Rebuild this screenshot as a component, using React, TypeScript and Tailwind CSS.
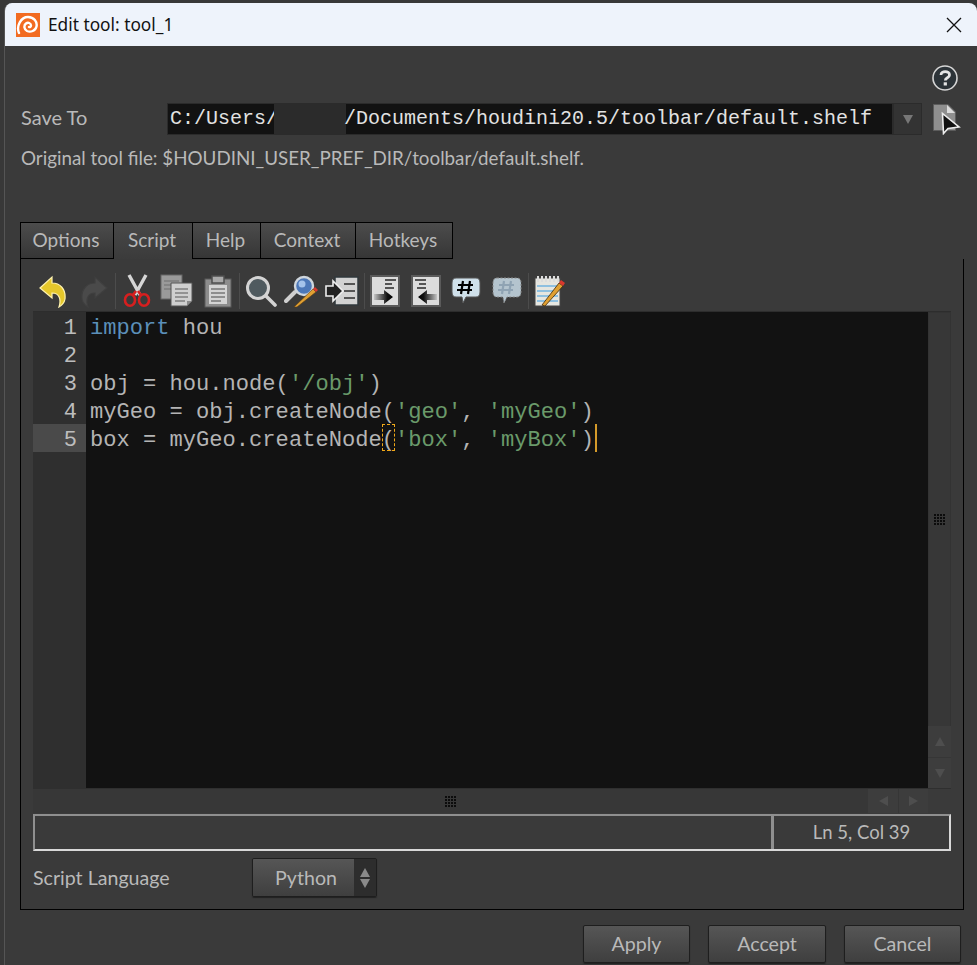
import type { ReactNode } from "react";

const SANS = "font-['Lato','Noto_Sans',sans-serif]";
const MONO = "font-['Liberation_Mono',monospace]";

function HoudiniLogo() {
  return (
    <svg width="24" height="24" viewBox="0 0 24 24" className="shrink-0">
      <rect width="24" height="24" fill="#f26b21" />
      <path
        d="M3 20 C0 13 5 4 12 4 C18 4 21.5 9 20.5 13.5 C19.5 18 14.5 19.5 11 18 C8 16.5 7.5 12.5 10 10.5 C12 9 15 10 15 12.5 C15 13.5 14 14.5 13 14"
        fill="none"
        stroke="#fff"
        strokeWidth="2.4"
        strokeLinecap="round"
      />
    </svg>
  );
}

function HelpIcon() {
  return (
    <svg width="28" height="28" viewBox="0 0 28 28">
      <circle cx="14" cy="15" r="12" fill="#222" />
      <circle cx="14" cy="14" r="12" fill="#2c3338" stroke="#d5d5d5" strokeWidth="1.6" />
      <path d="M10 11 C10 6.5 18.5 6.5 18.5 11 C18.5 14 14.3 13.6 14.3 16.6" fill="none" stroke="#e4e4e4" strokeWidth="2.8" />
      <rect x="12.7" y="18.3" width="3.2" height="3.2" fill="#e4e4e4" />
    </svg>
  );
}

function FileCursorIcon() {
  return (
    <svg width="28" height="32" viewBox="0 0 28 32">
      <path d="M0.5 1.5 H15 L22.5 9 V27.5 H0.5 Z" fill="#8f8f8f" stroke="#5c5c5c" />
      <path d="M14 2 L22 10 H14 Z" fill="#dcdcdc" />
      <path d="M9.5 10.5 L10.5 30.5 L15 25.5 L26 24 Z" fill="#111" stroke="#ededed" strokeWidth="1.6" />
    </svg>
  );
}

function Undo({ dim = false, flip = false }: { dim?: boolean; flip?: boolean }) {
  return (
    <svg width="30" height="34" viewBox="0 0 30 34" className={flip ? "-scale-x-100" : ""}>
      <path
        d="M2 14 L14 3 V9 C22 9 28 15 27 25 C26.5 28 24.5 31 21 33 C23 27 22.5 19 14 19 V24 Z"
        fill={dim ? "#4a4a4a" : "#e5c72b"}
        stroke={dim ? "#3f3f3f" : "#fff3b0"}
        strokeWidth="1.2"
      />
    </svg>
  );
}

function Scissors() {
  return (
    <svg width="30" height="34" viewBox="0 0 30 34">
      <path d="M7 1 L18 21 M24 1 L13 21" stroke="#d6d6d6" strokeWidth="3.4" />
      <ellipse cx="8" cy="26" rx="5" ry="5.8" fill="none" stroke="#d71f1f" strokeWidth="2.6" />
      <ellipse cx="22" cy="26" rx="5" ry="5.8" fill="none" stroke="#d71f1f" strokeWidth="2.6" />
      <path d="M11 21 L14 17 M19 21 L16 17" stroke="#d71f1f" strokeWidth="2.6" />
    </svg>
  );
}

function Copy() {
  return (
    <svg width="34" height="34" viewBox="0 0 34 34">
      <rect x="1" y="1" width="21" height="24" fill="#9a9a9a" stroke="#666" />
      <path d="M4 7 H19 M4 11 H19 M4 15 H19" stroke="#6f6f6f" />
      <path d="M11 9 H32 V27 L27 32 H11 Z" fill="#cfcfcf" stroke="#555" />
      <path d="M15 15 H28 M15 19 H28 M15 23 H28 M15 27 H25" stroke="#808080" strokeWidth="1.5" />
      <path d="M27 32 V27 H32 Z" fill="#8a8a8a" />
    </svg>
  );
}

function Paste() {
  return (
    <svg width="30" height="34" viewBox="0 0 30 34">
      <rect x="2" y="5" width="26" height="28" fill="#8d8d8d" stroke="#5a5a5a" />
      <rect x="6" y="11" width="18" height="19" fill="#d4d4d4" />
      <path d="M8 15 H22 M8 19 H22 M8 23 H22 M8 27 H18" stroke="#777" strokeWidth="1.4" />
      <rect x="9" y="2" width="12" height="7" fill="#aaa" stroke="#4f4f4f" strokeWidth="1.5" />
    </svg>
  );
}

function Search() {
  return (
    <svg width="32" height="32" viewBox="0 0 32 32">
      <circle cx="13" cy="13" r="10.5" fill="#4f5a5f" stroke="#d4d4d4" strokeWidth="3" />
      <path d="M21 21 L30 30" stroke="#d4d4d4" strokeWidth="3.6" strokeLinecap="round" />
    </svg>
  );
}

function Replace() {
  return (
    <svg width="34" height="34" viewBox="0 0 34 34">
      <path d="M2 27 L11 18" stroke="#cfcfcf" strokeWidth="4" strokeLinecap="round" />
      <circle cx="20" cy="12" r="9" fill="#4d78b8" stroke="#cfd6dd" strokeWidth="2.4" />
      <circle cx="18" cy="10" r="3.5" fill="#a5c3ea" />
      <path d="M10 33 L29 15 L32 18 L13 33 Z" fill="#e0a033" stroke="#5a3a10" strokeWidth="0.6" />
      <path d="M29 15 L31 13 L34 16 L32 18 Z" fill="#d9382e" />
    </svg>
  );
}

function Indent() {
  return (
    <svg width="34" height="30" viewBox="0 0 34 30">
      <rect x="10" y="1" width="23" height="28" fill="#d2d2d2" stroke="#30383c" strokeWidth="1.5" />
      <path d="M19 8 H30 M19 15 H30 M19 22 H30" stroke="#555" strokeWidth="2" />
      <path d="M1 10 H8 V5 L18 15 L8 25 V20 H1 Z" fill="#222" stroke="#eee" strokeWidth="1.6" />
    </svg>
  );
}

function Shift({ left = false }: { left?: boolean }) {
  const id = left ? "shift-l" : "shift-r";
  return (
    <svg width="30" height="32" viewBox="0 0 30 32" className={left ? "-scale-x-100" : ""}>
      <defs>
        <linearGradient id={id} x1="0" x2="1" y1="0" y2="0">
          <stop offset="0" stopColor="#c4c4c4" />
          <stop offset="0.7" stopColor="#111" />
          <stop offset="1" stopColor="#000" />
        </linearGradient>
      </defs>
      <rect x="1" y="1" width="28" height="30" fill="#dcdcdc" stroke="#5a5a5a" strokeWidth="2" />
      <path d="M15 5 H26 M15 9 H22 M15 13 H24" stroke="#555" strokeWidth="2" />
      <path d="M4 19 H14 V15 L23 22 L14 29 V25 H4 Z" fill={`url(#${id})`} />
    </svg>
  );
}

function Comment({ ghost = false }: { ghost?: boolean }) {
  return (
    <svg width="32" height="30" viewBox="0 0 32 30">
      <path
        d="M6 2 H26 Q30 2 30 7 V16 Q30 21 26 21 H16 L13 27 L12 21 H6 Q2 21 2 16 V7 Q2 2 6 2 Z"
        fill={ghost ? "#b4c4ce" : "#cfe0ea"}
        stroke={ghost ? "#888" : "#555"}
        strokeDasharray={ghost ? "2 1.5" : undefined}
      />
      <path
        d="M13 5 L11 18 M20 5 L18 18 M8 9 H23 M7 14 H22"
        stroke={ghost ? "#8fa3b3" : "#000"}
        strokeWidth="2.2"
      />
    </svg>
  );
}

function Notes() {
  return (
    <svg width="32" height="32" viewBox="0 0 32 32">
      <rect x="1" y="3" width="25" height="28" fill="#e6e6e0" stroke="#444" />
      <path d="M3 11 H24 M3 16 H24 M3 21 H24 M3 26 H24" stroke="#8fc0e0" strokeWidth="2" />
      <path d="M4 1 V7 M8 1 V7 M12 1 V7 M16 1 V7 M20 1 V7 M24 1 V7" stroke="#ddd" strokeWidth="2" />
      <path d="M8 30 L25 8 L29 11 L11 31 Z" fill="#e0a033" stroke="#3f2a0a" strokeWidth="0.8" />
      <path d="M25 8 L27 5 L31 8 L29 11 Z" fill="#d9382e" />
    </svg>
  );
}

function ToolBtn({ children }: { children: ReactNode }) {
  return <div className="flex h-[38px] w-[40.7px] shrink-0 items-center justify-center">{children}</div>;
}

function ToolSep() {
  return <div className="h-[36px] w-[2px] shrink-0 border-r border-[#4c4c4c]" />;
}

function Grip() {
  return (
    <div className="grid grid-cols-4 gap-px">
      {Array.from({ length: 16 }).map((_, i) => (
        <div key={i} className="h-[2px] w-[2px] bg-[#0c0c0c]" />
      ))}
    </div>
  );
}

function Tab({ label, width, active = false }: { label: string; width: string; active?: boolean }) {
  return (
    <div
      className={
        active
          ? `relative z-10 -mb-px flex h-[37px] items-center justify-center border-t border-r border-black bg-gradient-to-b from-[#484848] to-[#3b3b3b] pr-[2px] pb-[1px] ${width}`
          : `flex h-[37px] items-center justify-center border-t border-r border-b border-black bg-gradient-to-b from-[#4c4c4c] to-[#363636] pr-[2px] pb-[1px] ${width}`
      }
    >
      {label}
    </div>
  );
}

function DialogBtn({ label, width }: { label: string; width: string }) {
  return (
    <div
      className={`flex h-[38px] items-center justify-center rounded-[2px] border border-[#1e1e1e] bg-gradient-to-b from-[#565656] to-[#3f3f3f] text-[19.6px] shadow-[0_1px_1px_#222] ${width}`}
    >
      {label}
    </div>
  );
}

const CODE_LINES: ReactNode[] = [
  <>
    <span className="text-[#5b8fb9]">import</span> hou
  </>,
  <>&nbsp;</>,
  <>
    obj = hou.node(<span className="text-[#6a9a6a]">'/obj'</span>)
  </>,
  <>
    myGeo = obj.createNode(<span className="text-[#6a9a6a]">'geo'</span>, <span className="text-[#6a9a6a]">'myGeo'</span>)
  </>,
  <>
    box = myGeo.createNode
    <span className="inline-block h-[27px] w-[13.3px] align-top outline-1 -outline-offset-1 outline-dashed outline-[#f0a818]">(</span>
    <span className="text-[#6a9a6a]">'box'</span>, <span className="text-[#6a9a6a]">'myBox'</span>)
    <span className="ml-px inline-block h-[28px] w-[2px] bg-[#d49a2a] align-top" />
  </>,
];

export default function App() {
  return (
    <div className={`h-[965px] w-[977px] overflow-hidden bg-[#383838] pt-[3px] text-[20px] text-[#b9b9b9] ${SANS}`}>
      <div className="ml-1 flex h-[962px] flex-col overflow-hidden rounded-t-[8px] border-l border-[#555] bg-[#3a3a3a]">
        {/* title bar */}
        <div className="flex h-[43px] shrink-0 items-center bg-[#eef3fb] pl-[11px] pr-[14px] text-[#111]">
          <HoudiniLogo />
          <span className="ml-[8px] flex-1 font-['Noto_Sans',sans-serif] text-[17.3px]">Edit tool: tool_1</span>
          <svg width="16" height="16" viewBox="0 0 16 16" className="mr-[1px]">
            <path d="M1 1 L15 15 M15 1 L1 15" stroke="#111" strokeWidth="1.3" />
          </svg>
        </div>

        {/* save to */}
        <div className="flex justify-end pr-[18px] pt-[18px]">
          <HelpIcon />
        </div>
        <div className="mt-[10px] flex h-[34px] items-center pl-[16px]">
          <span className="w-[146px] pb-[4px]">Save To</span>
          <div className={`flex h-[32px] w-[726px] items-center overflow-hidden border border-[#2b2b2b] bg-[#121212] pl-[2px] text-[20px] whitespace-pre text-[#e2e2e2] ${MONO}`}>
            C:/Users/
            <span className="-ml-[4px] -mr-[2px] h-[30px] w-[72px] shrink-0 bg-[#2b2b2b]" />
            /Documents/houdini20.5/toolbar/default.shelf
          </div>
          <div className="flex h-[32px] w-[29px] items-center justify-center border border-[#2b2b2b] bg-[#333]">
            <div className="h-0 w-0 border-x-[5px] border-t-[9px] border-x-transparent border-t-[#777]" />
          </div>
          <div className="ml-[11px]">
            <FileCursorIcon />
          </div>
        </div>
        <div className="mt-[8px] pl-[16px] text-[18.8px]">Original tool file: $HOUDINI_USER_PREF_DIR/toolbar/default.shelf.</div>

        {/* tabs */}
        <div className="mt-[50px] ml-[15px] flex border-l border-black text-[19px]">
          <Tab label="Options" width="w-[93px]" />
          <Tab label="Script" width="w-[79px]" active />
          <Tab label="Help" width="w-[68px]" />
          <Tab label="Context" width="w-[95px]" />
          <Tab label="Hotkeys" width="w-[97px]" />
        </div>

        {/* script panel */}
        <div className="ml-[15px] flex h-[651px] w-[944px] flex-col border border-t-0 border-black border-t-[#555] bg-[#3a3a3a] px-[12px] pt-[11px]">
          <div className="flex h-[42px] items-center border-b border-[#2d2d2d]">
            <ToolBtn><Undo /></ToolBtn>
            <ToolBtn><Undo dim flip /></ToolBtn>
            <ToolSep />
            <ToolBtn><Scissors /></ToolBtn>
            <ToolBtn><Copy /></ToolBtn>
            <ToolBtn><Paste /></ToolBtn>
            <ToolSep />
            <ToolBtn><Search /></ToolBtn>
            <ToolBtn><Replace /></ToolBtn>
            <ToolBtn><Indent /></ToolBtn>
            <ToolSep />
            <ToolBtn><Shift /></ToolBtn>
            <ToolBtn><Shift left /></ToolBtn>
            <ToolBtn><Comment /></ToolBtn>
            <ToolBtn><Comment ghost /></ToolBtn>
            <ToolSep />
            <ToolBtn><Notes /></ToolBtn>
          </div>

          {/* editor */}
          <div className="flex h-[476px]">
            <div className={`flex h-full w-[53px] shrink-0 flex-col bg-[#2f2f2f] text-[22px] text-[#bdbdbd] ${MONO}`}>
              {[1, 2, 3, 4, 5].map((n) => (
                <div key={n} className={`h-[28px] pr-[9px] text-right leading-[34px] ${n === 5 ? "bg-[#4a4a4a]" : ""}`}>
                  {n}
                </div>
              ))}
            </div>
            <div className={`flex-1 bg-[#121212] pl-[4px] text-[22.1px] text-[#b4b4b4] ${MONO}`}>
              {CODE_LINES.map((line, i) => (
                <div key={i} className="h-[28px] whitespace-pre leading-[34px]">
                  {line}
                </div>
              ))}
            </div>
            <div className="flex w-[23px] shrink-0 flex-col bg-[#3a3a3a]">
              <div className="flex flex-1 items-center justify-center border-x border-t border-[#333] bg-[#373737]">
                <Grip />
              </div>
              <div className="flex h-[32px] items-center justify-center border-b border-[#363636] bg-[#3d3d3d]">
                <div className="h-0 w-0 border-x-[5px] border-b-[9px] border-x-transparent border-b-[#4e4e4e]" />
              </div>
              <div className="flex h-[30px] items-center justify-center bg-[#3d3d3d]">
                <div className="h-0 w-0 border-x-[5px] border-t-[9px] border-x-transparent border-t-[#4e4e4e]" />
              </div>
            </div>
          </div>

          <div className="flex h-[25px] border-t border-[#2f2f2f]">
            <div className="flex flex-1 items-center justify-center bg-[#373737]">
              <Grip />
            </div>
            <div className="flex w-[60px] bg-[#3d3d3d]">
              <div className="flex w-[31px] items-center justify-center border-r border-[#363636]">
                <div className="h-0 w-0 border-y-[5px] border-r-[9px] border-y-transparent border-r-[#4e4e4e]" />
              </div>
              <div className="flex w-[29px] items-center justify-center">
                <div className="h-0 w-0 border-y-[5px] border-l-[9px] border-y-transparent border-l-[#4e4e4e]" />
              </div>
            </div>
            <div className="w-[23px] bg-[#3a3a3a]" />
          </div>

          {/* status */}
          <div className="mt-[1px] flex h-[37px] border-[2px] border-[#8f8f8f] border-r-[#d8d8d8] border-b-[#d8d8d8]">
            <div className="flex-1 border-r-[3px] border-[#8f8f8f]" />
            <div className="flex w-[175px] items-center justify-center text-[18.5px]">Ln 5, Col 39</div>
          </div>

          <div className="mt-[7px] flex items-center text-[19.6px]">
            <span className="w-[219px]">Script Language</span>
            <div className="flex h-[39px] w-[125px] overflow-hidden rounded-[2px] border border-[#1e1e1e] shadow-[0_1px_1px_#222]">
              <div className="flex flex-1 items-center justify-center bg-gradient-to-b from-[#565656] to-[#3f3f3f] pl-[5px]">Python</div>
              <div className="flex w-[22px] flex-col items-center justify-center gap-[2px] bg-[#2d2d2d]">
                <div className="h-0 w-0 border-x-[5px] border-b-[9px] border-x-transparent border-b-[#8a8a8a]" />
                <div className="h-0 w-0 border-x-[5px] border-t-[9px] border-x-transparent border-t-[#8a8a8a]" />
              </div>
            </div>
          </div>
        </div>

        {/* dialog buttons */}
        <div className="mt-[15px] flex justify-end gap-[18px] pr-[16px]">
          <DialogBtn label="Apply" width="w-[107px]" />
          <DialogBtn label="Accept" width="w-[118px]" />
          <DialogBtn label="Cancel" width="w-[117px]" />
        </div>
      </div>
    </div>
  );
}
